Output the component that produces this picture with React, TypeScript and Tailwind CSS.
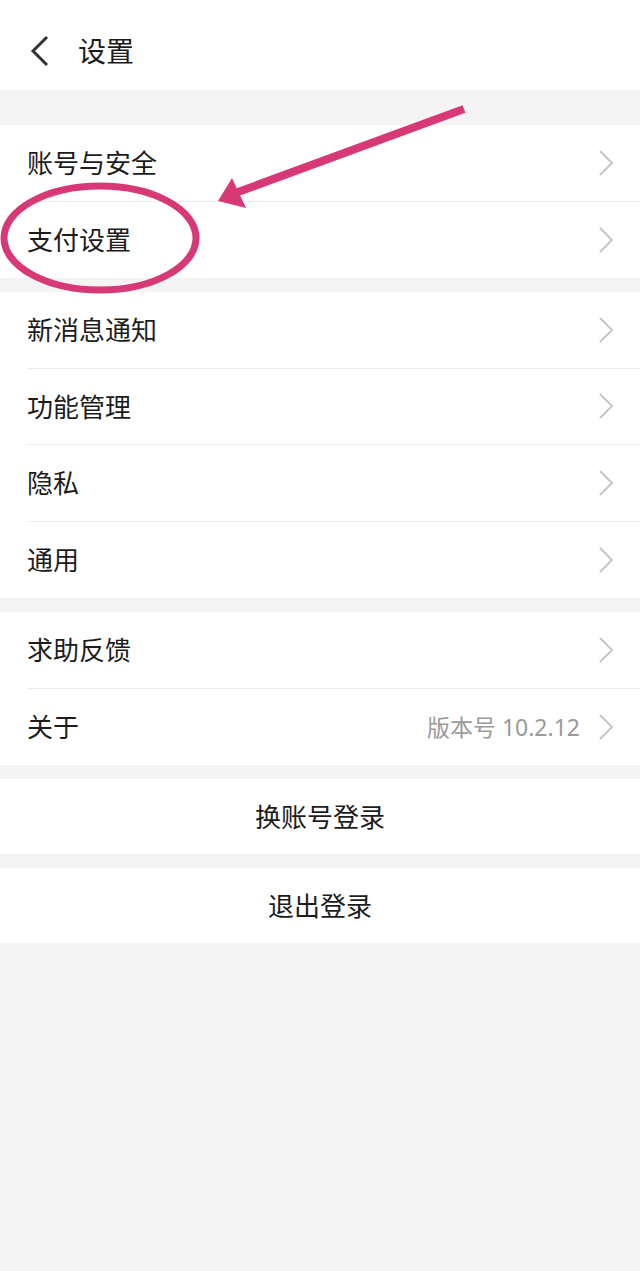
import React from 'react';

type Row = { label: string; extra?: string };

const groups: Row[][] = [
  [{ label: '账号与安全' }, { label: '支付设置' }],
  [{ label: '新消息通知' }, { label: '功能管理' }, { label: '隐私' }, { label: '通用' }],
  [{ label: '求助反馈' }, { label: '关于', extra: '版本号 10.2.12' }],
];

function Chevron() {
  return (
    <svg width="16" height="28" viewBox="0 0 16 28" className="shrink-0">
      <path d="M2 2 L14 14 L2 26" fill="none" stroke="#c6c6c6" strokeWidth="2" />
    </svg>
  );
}

function SettingRow({ row, last }: { row: Row; last: boolean }) {
  return (
    <div className="flex h-[76.5px] items-stretch pl-[27px]">
      <div className={'flex flex-1 items-center pr-[26px] ' + (last ? '' : 'border-b border-[#ececec]')}>
        <span className="flex-1 pt-[2px] text-[26px] text-[#1c1c1c]">{row.label}</span>
        {row.extra && <span className="mr-[18px] text-[23px] text-[#9a9a9a]">{row.extra}</span>}
        <Chevron />
      </div>
    </div>
  );
}

export default function App() {
  return (
    <div
      className="relative min-h-[1271px] w-[640px] bg-[#f4f4f4]"
      style={{ fontFamily: '"Noto Sans", "Noto Sans CJK SC", sans-serif' }}
    >
      <header className="flex h-[90px] items-center bg-white pl-[30px] pt-[12px]">
        <svg width="20" height="32" viewBox="0 0 20 32">
          <path d="M17 2 L3 16 L17 30" fill="none" stroke="#333" strokeWidth="3" />
        </svg>
        <h1 className="ml-[28px] text-[28px] text-[#1c1c1c]">设置</h1>
      </header>

      <div className="mt-[35px] flex flex-col gap-[14px]">
        {groups.map((g, gi) => (
          <div key={gi} className="bg-white">
            {g.map((row, i) => (
              <SettingRow key={row.label} row={row} last={i === g.length - 1} />
            ))}
          </div>
        ))}
        <button className="flex h-[75px] items-center justify-center bg-white pt-[2px] text-[26px] text-[#1c1c1c]">
          换账号登录
        </button>
        <button className="flex h-[75px] items-center justify-center bg-white pt-[2px] text-[26px] text-[#1c1c1c]">
          退出登录
        </button>
      </div>

      {/* annotation overlay */}
      <svg className="pointer-events-none absolute left-0 top-0" width="640" height="320" viewBox="0 0 640 320">
        <ellipse cx="100" cy="238" rx="96" ry="52" fill="none" stroke="#d83876" strokeWidth="7" />
        <line x1="464" y1="109" x2="238" y2="192" stroke="#d83876" strokeWidth="8" />
        <polygon points="218,201 232,178 246,208" fill="#d83876" />
      </svg>
    </div>
  );
}
